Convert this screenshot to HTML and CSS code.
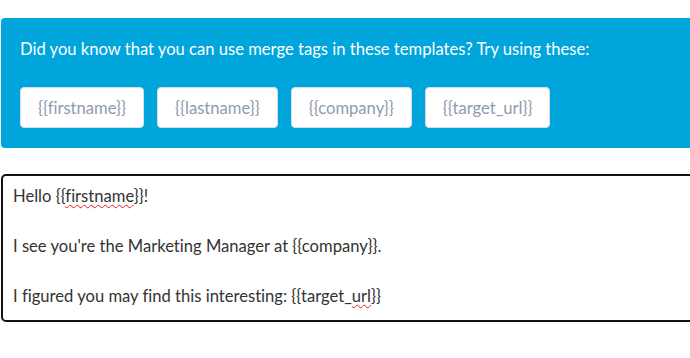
FILE: index.html
```html
<!DOCTYPE html>
<html lang="en">
<head>
    <meta charset="UTF-8">
    <meta name="viewport" content="width=device-width, initial-scale=1.0">
    <title>Email Template</title>
    <link rel="stylesheet" href="styles.css">
</head>
<body>
    <div class="tags-panel">
        <p class="tags-hint">Did you know that you can use merge tags in these templates? Try using these:</p>
        <div class="tag-list">
            <button class="tag">{{firstname}}</button>
            <button class="tag">{{lastname}}</button>
            <button class="tag">{{company}}</button>
            <button class="tag">{{target_url}}</button>
        </div>
    </div>

    <div class="editor">
        <p>Hello {{<span class="misspelled">firstname</span>}}!</p>
        <p><br></p>
        <p>I see you're the Marketing Manager at {{company}}.</p>
        <p><br></p>
        <p>I figured you may find this interesting: {{target_<span class="misspelled">url</span>}}</p>
    </div>
</body>
</html>
```

FILE: styles.css
```css
* {
    margin: 0;
    padding: 0;
    box-sizing: border-box;
    font-family: "Lato", "Liberation Sans", sans-serif;
    font-variant-ligatures: none;
}
body {
    background: #fff;
    color: #333;
    padding: 18px 0 0 1px;
    width: 720px;
}
.tags-panel {
    background: #00a5db;
    border-radius: 4px;
    padding: 20px 19px 20px;
}
.tags-hint {
    color: #fff;
    font-size: 16.6px;
    line-height: 22px;
}
.tag-list {
    display: flex;
    gap: 13px;
    margin-top: 27px;
}
.tag {
    background: #fff;
    border: 1px solid #d8dde5;
    border-radius: 4px;
    color: #8e9bb1;
    font-size: 16.6px;
    height: 41px;
    padding: 0 17px;
    cursor: pointer;
}
.editor {
    margin-top: 26px;
    border: 2px solid #111;
    border-radius: 5px;
    padding: 8px 10px 11px;
    font-size: 16.6px;
    line-height: 25px;
    color: #333;
}
.misspelled {
    text-decoration: underline wavy #e02020;
    text-decoration-thickness: 1px;
    text-underline-offset: 2px;
}
```
